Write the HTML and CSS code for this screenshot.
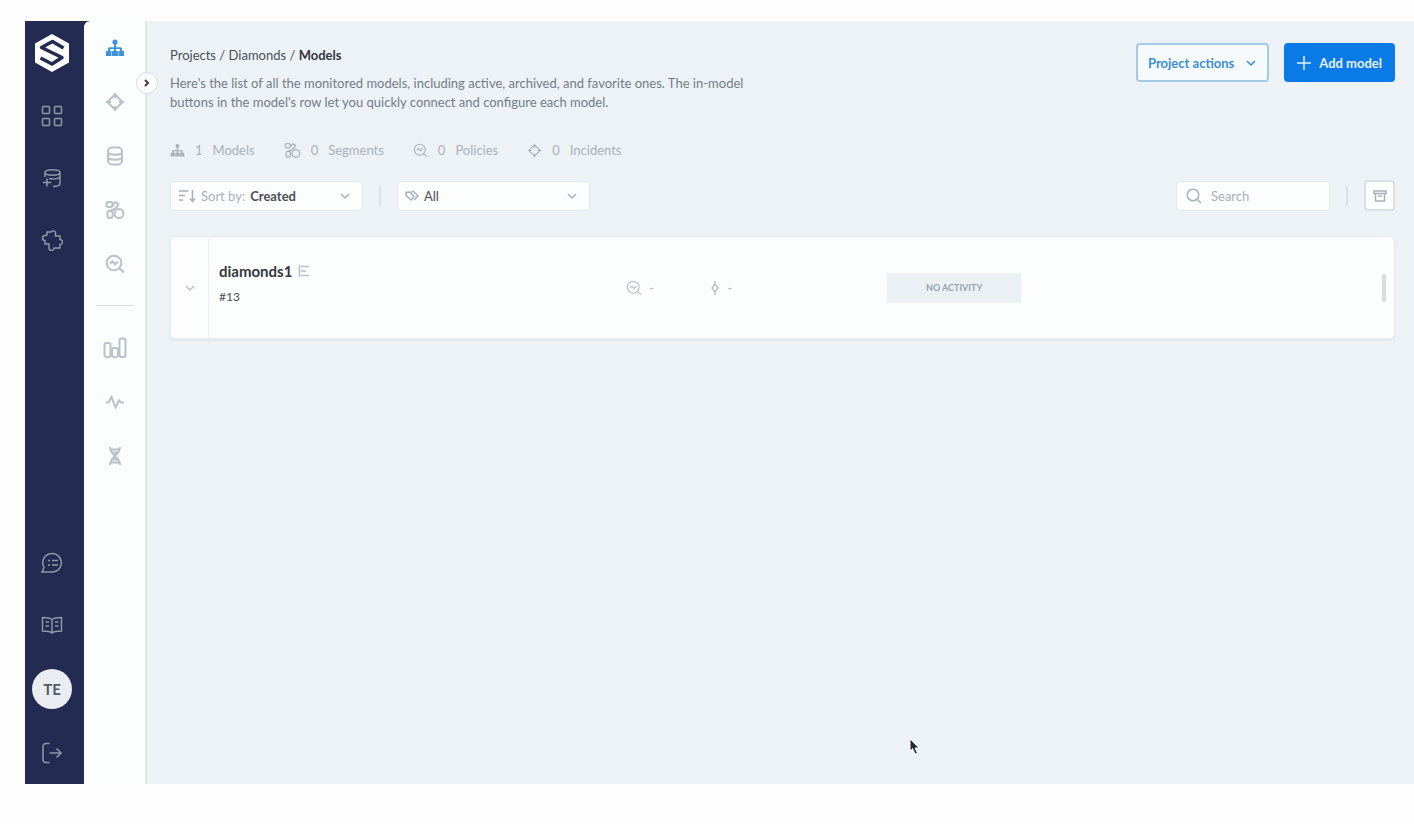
FILE: index.html
```html
<!DOCTYPE html>
<html lang="en">

<head>
    <meta charset="UTF-8">
    <meta name="viewport" content="width=device-width, initial-scale=1.0">
    <title>Diamonds - Models</title>
    <link rel="stylesheet" href="styles.css">
</head>

<body>
    <!-- shared icons -->
    <svg class="sprite" aria-hidden="true">
        <symbol id="models" viewBox="0 0 20 20">
            <circle cx="10" cy="4" r="2.6" />
            <path d="M9 6h2v3.200h4.500a1.500 1.500 0 0 1 1.500 1.500V13h2v5h-5.500v-5H15v-2h-4v2h2v5H7v-5h2v-2H5v2h1.500v5H1v-5h2v-2.300a1.500 1.500 0 0 1 1.500-1.500H9z" />
        </symbol>
        <symbol id="incidents" viewBox="0 0 20 20">
            <rect x="4.600" y="4.600" width="10.800" height="10.800" rx="1.500" transform="rotate(45 10 10)" />
            <path d="M10 1v5M10 14v5M1 10h5M14 10h5" />
        </symbol>
        <symbol id="data" viewBox="0 0 20 20">
            <rect x="3" y="1.500" width="14" height="17" rx="4" />
            <path d="M3 7.500c3 1.500 11 1.500 14 0M3 12.500c3 1.500 11 1.500 14 0" />
        </symbol>
        <symbol id="segments" viewBox="0 0 20 20">
            <circle cx="14" cy="13.500" r="4.500" />
            <rect x="1.500" y="2" width="6" height="5" rx="2" />
            <rect x="2.500" y="11" width="5" height="7" rx="2" />
            <path d="M7.500 5l3-3 3 2-2 3.500-3 2-4 1.500" />
        </symbol>
        <symbol id="policies" viewBox="0 0 20 20">
            <circle cx="9" cy="9" r="7.300" />
            <path d="M14.500 14.500L19 18.500M5 9.500l2.500-2 2.500 3 3-3" />
        </symbol>
        <symbol id="chevron" viewBox="0 0 12 12">
            <path d="M2 4l4 4 4-4" />
        </symbol>
    </svg>

    <div class="app">
        <nav class="nav" aria-label="Main">
            <a class="nav-logo" href="#" aria-label="Home">
                <svg width="36" height="40" viewBox="0 0 36 40">
                    <path d="M18 1L35 10.500v19L18 39 1 29.500v-19z" fill="#fdfdfd" />
                    <path d="M29.500 15L18.500 8.500 7.500 14.500 28 24.500 18 31 6.500 25" fill="none" stroke="#232b52" stroke-width="3.500" stroke-linejoin="round" />
                </svg>
            </a>
            <a class="nav-link" href="#" aria-label="Projects">
                <svg class="icon" width="22" height="22" viewBox="0 0 22 22">
                    <rect x="1.500" y="1.500" width="7" height="7" rx="1" />
                    <rect x="13.500" y="1.500" width="7" height="7" rx="1" />
                    <rect x="1.500" y="13.500" width="7" height="7" rx="1" />
                    <rect x="13.500" y="13.500" width="7" height="7" rx="1" />
                </svg>
            </a>
            <a class="nav-link" href="#" aria-label="Data sources">
                <svg class="icon" width="20" height="20" viewBox="0 0 20 20">
                    <path d="M3 9V4.500C3 .7 18 .7 18 4.500v11c0 2-3 3-7 3M3 4.500c0 3.500 15 3.500 15 0M7 10.500c5 1 11 0 11-2" />
                    <path d="M1 14.500h8M5 10.500v8" />
                </svg>
            </a>
            <a class="nav-link" href="#" aria-label="Integrations">
                <svg class="icon" width="22" height="22" viewBox="0 0 22 22">
                    <path d="M6 3h4a2.500 2.500 0 0 1 4.500 2v2H19v3.500a2.500 2.500 0 0 1 0 5V19h-6a2.500 2.500 0 0 1-5 0v-4H4v-3.500a2.500 2.500 0 0 1 0-5L6 6z" />
                </svg>
            </a>
            <div class="spacer"></div>
            <a class="nav-link" href="#" aria-label="Chat">
                <svg class="icon" width="24" height="22" viewBox="0 0 24 22">
                    <path d="M2 20l2-4.500A9.300 9.300 0 1 1 13 20z" />
                    <path d="M8 8.500h2M12 8.500h6M8 13h2M12 13h6" />
                </svg>
            </a>
            <a class="nav-link" href="#" aria-label="Documentation">
                <svg class="icon" width="22" height="18" viewBox="0 0 22 18">
                    <path d="M11 3.500C8.500 1.500 5 1.500 1.500 1.500V15C5 15 9 15 11 17c2-2 6-2 9.500-2V1.500C17 1.500 13.500 1.500 11 3.500zM11 3.500V17M4.500 6H8M4.500 10H8M14 6h3.500M14 10h3.500" />
                </svg>
            </a>
            <button class="avatar" type="button">TE</button>
            <a class="nav-link" href="#" aria-label="Log out">
                <svg class="icon" width="22" height="22" viewBox="0 0 22 22">
                    <path d="M8.500 1.500H5A3 3 0 0 0 2 4.500v13a3 3 0 0 0 3 3h3.500M8.500 11H20M15.500 6.500L20 11l-4.500 4.500" />
                </svg>
            </a>
        </nav>

        <aside class="side">
            <button class="side-toggle" type="button" aria-label="Expand menu">
                <svg width="8" height="8" viewBox="0 0 8 8">
                    <path d="M2 1l3 3-3 3" />
                </svg>
            </button>
            <a class="side-link active" href="#" aria-label="Models"><svg class="solid" width="20" height="20"><use href="#models" /></svg></a>
            <a class="side-link" href="#" aria-label="Incidents"><svg class="icon" width="20" height="20"><use href="#incidents" /></svg></a>
            <a class="side-link" href="#" aria-label="Data"><svg class="icon" width="20" height="20"><use href="#data" /></svg></a>
            <a class="side-link" href="#" aria-label="Segments"><svg class="icon" width="20" height="20"><use href="#segments" /></svg></a>
            <a class="side-link" href="#" aria-label="Policies"><svg class="icon" width="20" height="20"><use href="#policies" /></svg></a>
            <hr class="side-line">
            <a class="side-link" href="#" aria-label="Dashboards">
                <svg class="icon" width="24" height="22" viewBox="0 0 24 22">
                    <rect x="1.500" y="6" width="6" height="14" rx="2" />
                    <rect x="9" y="11" width="6" height="9" rx="2" />
                    <rect x="16.500" y="1.500" width="6" height="18.500" rx="2" />
                </svg>
            </a>
            <a class="side-link" href="#" aria-label="Activity">
                <svg class="icon" width="20" height="14" viewBox="0 0 20 14">
                    <path d="M1 7.500h2.500L6.500 2l4 10.500 3.500-7 2 2h3" />
                </svg>
            </a>
            <a class="side-link" href="#" aria-label="Features">
                <svg class="icon" width="14" height="20" viewBox="0 0 14 20">
                    <path d="M2 1c0 9 10 9 10 18M12 1c0 9-10 9-10 18M3 3.500h8M4 6.500h6M4 13.500h6M3 16.500h8" />
                </svg>
            </a>
        </aside>

        <main class="main">
            <header class="header">
                <div class="intro">
                    <nav class="breadcrumb" aria-label="Breadcrumb">
                        <a href="#">Projects</a> / <a href="#">Diamonds</a> / <b>Models</b>
                    </nav>
                    <p class="description">Here's the list of all the monitored models, including active, archived, and favorite ones. The in-model buttons in the model's row let you quickly connect and configure each model.</p>
                </div>
                <div class="actions">
                    <button class="btn btn-outline" type="button">
                        Project actions
                        <svg class="icon" width="12" height="12"><use href="#chevron" /></svg>
                    </button>
                    <button class="btn btn-primary" type="button">
                        <svg class="icon" width="14" height="14" viewBox="0 0 14 14">
                            <path d="M7 0v14M0 7h14" />
                        </svg>
                        Add model
                    </button>
                </div>
            </header>

            <ul class="stats">
                <li><svg class="solid" width="15" height="15"><use href="#models" /></svg><span>1</span>Models</li>
                <li><svg class="icon" width="17" height="17"><use href="#segments" /></svg><span>0</span>Segments</li>
                <li><svg class="icon" width="15" height="15"><use href="#policies" /></svg><span>0</span>Policies</li>
                <li><svg class="icon" width="15" height="15"><use href="#incidents" /></svg><span>0</span>Incidents</li>
            </ul>

            <div class="filters">
                <div class="field">
                    <svg class="icon" width="18" height="14" viewBox="0 0 18 14">
                        <path d="M1 2h9M1 6.500h6M1 11h4M14.500 1v11M12 9.500l2.500 3 2.500-3" />
                    </svg>
                    <label for="sort">Sort by:</label>
                    <select class="select-sort" id="sort">
                        <option>Created</option>
                        <option>Name</option>
                    </select>
                    <svg class="icon" width="12" height="12"><use href="#chevron" /></svg>
                </div>
                <div class="separator"></div>
                <div class="field">
                    <svg class="icon" width="14" height="12" viewBox="0 0 14 12">
                        <path d="M1 2.500v3L6 10l3-3.500L5 2zM6.500 1.500h2L13 6l-4 4" />
                    </svg>
                    <select id="tags" aria-label="Tags">
                        <option>All</option>
                    </select>
                    <svg class="icon" width="12" height="12"><use href="#chevron" /></svg>
                </div>
                <div class="spacer"></div>
                <div class="field search">
                    <svg class="icon" width="16" height="16" viewBox="0 0 16 16">
                        <circle cx="7" cy="7" r="5.800" />
                        <path d="M11.500 11.500L15 15" />
                    </svg>
                    <input type="text" placeholder="Search" aria-label="Search">
                </div>
                <div class="separator"></div>
                <button class="btn-archive" type="button" aria-label="Archived models">
                    <svg class="icon" width="14" height="12" viewBox="0 0 14 12">
                        <path d="M1 1h12v2.500H1zM2.500 3.500V11h9V3.500M5 6h4" />
                    </svg>
                </button>
            </div>

            <section class="model">
                <button class="model-expand" type="button" aria-label="Show model details">
                    <svg class="icon" width="12" height="12"><use href="#chevron" /></svg>
                </button>
                <div class="model-name">
                    <h2>diamonds1
                        <svg class="icon" width="12" height="12" viewBox="0 0 12 12">
                            <path d="M1.500 0v12M3 1.500h8M3 6h5M3 10.500h8" />
                        </svg>
                    </h2>
                    <p>#13</p>
                </div>
                <div class="model-counts">
                    <span><svg class="icon" width="16" height="16"><use href="#policies" /></svg>-</span>
                    <span><svg class="icon" width="10" height="14" viewBox="0 0 10 14">
                        <path d="M5 0v3M5 11v3M5 3L2 7l3 4 3-4z" />
                    </svg>-</span>
                </div>
                <div class="model-activity"><span>NO ACTIVITY</span></div>
                <button class="model-menu" type="button" aria-label="Model menu"></button>
            </section>
        </main>
    </div>

    <svg class="cursor" width="12" height="18" viewBox="0 0 12 18" aria-hidden="true">
        <path d="M1 1v12l2.500-2.500L6 16l2.500-1-2.500-5h4z" />
    </svg>
</body>

</html>
```
FILE: styles.css
```css
* {
    box-sizing: border-box;
}

body {
    display: flex;
    min-height: 100vh;
    margin: 0;
    padding: 21px 0 40px 25px;
    font-family: Lato, sans-serif;
    font-size: 13px;
    background-color: #fdfdfd;
    color: #4a5058;
}

button,
input,
select {
    font: inherit;
    color: inherit;
}

a {
    color: inherit;
    text-decoration: none;
}

svg {
    flex: none;
}

.sprite {
    position: absolute;
    width: 0;
    height: 0;
}

.icon {
    fill: none;
    stroke: currentColor;
    stroke-width: 1.5;
}

.solid {
    fill: currentColor;
}

.spacer {
    flex: 1;
}

.app {
    display: flex;
    flex: 1;
    background-color: #232b52;
}

/* dark bar */

.nav {
    display: flex;
    flex-direction: column;
    width: 59px;
    padding-right: 5px;
    color: #8c9aa5;
}

.nav-logo,
.nav-link {
    display: flex;
    align-items: center;
    justify-content: center;
    height: 62px;
}

.nav-logo {
    height: 64px;
}

.avatar {
    width: 40px;
    height: 40px;
    margin: 13px auto;
    padding: 0;
    border: none;
    border-radius: 50%;
    background-color: #e9edf2;
    color: #555b62;
    font-size: 15px;
    font-weight: bold;
}

/* project menu */

.side {
    position: relative;
    width: 63px;
    border-right: 2px solid #e2e8ec;
    border-radius: 6px 0 0 0;
    background-color: #fcfdfd;
    color: #b9c1c9;
}

.side .icon {
    stroke-width: 2;
}

.side-link {
    display: flex;
    align-items: center;
    justify-content: center;
    height: 54px;
}

.side-link.active {
    color: #3e94dc;
}

.side-line {
    width: 38px;
    margin: 14px auto 15px;
    border: none;
    border-top: 1px solid #dcdfe2;
}

.side-toggle {
    position: absolute;
    top: 51px;
    right: -13px;
    display: flex;
    align-items: center;
    justify-content: center;
    width: 22px;
    height: 22px;
    padding: 0;
    border: 1px solid #d9dee2;
    border-radius: 50%;
    background-color: #fdfdfd;
}

.side-toggle path {
    fill: none;
    stroke: #3b4046;
    stroke-width: 2;
}

/* content */

.main {
    flex: 1;
    padding: 22px 19px 24px 23px;
    background-color: #edf2f6;
}

.header {
    display: flex;
    justify-content: space-between;
    gap: 24px;
}

.breadcrumb {
    padding-top: 2px;
    line-height: 20px;
}

.breadcrumb b {
    color: #33383e;
}

.description {
    max-width: 600px;
    margin: 9px 0 0;
    color: #747d86;
    line-height: 19px;
}

.actions {
    display: flex;
    align-items: flex-start;
    gap: 15px;
}

.btn {
    display: flex;
    align-items: center;
    height: 39px;
    padding: 0 11px;
    border: 2px solid #0a7be6;
    border-radius: 4px;
    font-weight: bold;
    white-space: nowrap;
}

.btn-outline {
    gap: 11px;
    padding: 0 10px;
    border-color: #a3cbe6;
    background-color: #f7fafc;
    color: #3c8fd0;
}

.btn-primary {
    gap: 8px;
    background-color: #0a7be6;
    color: #e4f1fc;
}

.stats {
    display: flex;
    gap: 29px;
    margin: 28px 0 0;
    padding: 0;
    list-style: none;
    color: #a9b1b9;
    line-height: 20px;
}

.stats li {
    display: flex;
    align-items: center;
    gap: 10px;
}

.filters {
    display: flex;
    align-items: center;
    gap: 16px;
    margin-top: 20px;
}

.field {
    display: flex;
    align-items: center;
    gap: 5px;
    width: 193px;
    height: 30px;
    padding: 0 11px 0 7px;
    border: 1px solid #e3e8ec;
    border-radius: 3px;
    background-color: #fcfdfd;
    color: #a9b1b9;
}

.field select,
.field input {
    flex: 1;
    min-width: 0;
    padding: 0;
    border: none;
    background: none;
    outline: none;
}

.field select {
    appearance: none;
    color: #4a5058;
}

.field .select-sort {
    font-weight: bold;
}

.field input::placeholder {
    color: #a9b1b9;
}

.field.search {
    gap: 9px;
    width: 154px;
    padding: 0 9px;
}

.separator {
    width: 2px;
    height: 20px;
    background-color: #dce1e6;
}

.btn-archive {
    display: flex;
    align-items: center;
    justify-content: center;
    width: 31px;
    height: 31px;
    padding: 0;
    border: 2px solid #dbdfe3;
    border-radius: 4px;
    background-color: #fcfdfd;
    color: #a9b1b9;
}

/* model row */

.model {
    display: grid;
    grid-template-columns: 38px 24fr 15fr 28fr 20px;
    align-items: center;
    min-height: 103px;
    margin-top: 25px;
    border: 1px solid #e6ebef;
    border-radius: 4px;
    background-color: #fcfdfd;
    box-shadow: 0 2px 2px #e2e8ed;
    color: #b9c1c9;
}

.model-expand {
    display: flex;
    align-items: center;
    justify-content: center;
    align-self: stretch;
    padding: 0;
    border: none;
    border-right: 1px solid #edf0f2;
    background: none;
}

.model-name {
    padding: 0 0 8px 10px;
    line-height: 20px;
}

.model-name h2 {
    display: flex;
    align-items: center;
    gap: 6px;
    margin: 0;
    color: #33383e;
    font-size: 15px;
}

.model-name h2 svg {
    color: #b9c1c9;
}

.model-name p {
    margin: 6px 0 0;
    color: #4a5058;
    font-size: 12px;
}

.model-counts {
    display: flex;
    gap: 56px;
    font-weight: bold;
}

.model-counts span {
    display: flex;
    align-items: center;
    gap: 7px;
}

.model-activity span {
    display: block;
    width: 134px;
    background-color: #ebf0f5;
    color: #9aa3ac;
    font-size: 9px;
    font-weight: bold;
    line-height: 30px;
    text-align: center;
}

.model-menu {
    justify-self: center;
    width: 4px;
    height: 28px;
    padding: 0;
    border: none;
    background-color: #d9dde1;
}

.cursor {
    position: absolute;
    top: 738px;
    left: 909px;
    fill: #25282c;
    stroke: #fdfdfd;
}
```
